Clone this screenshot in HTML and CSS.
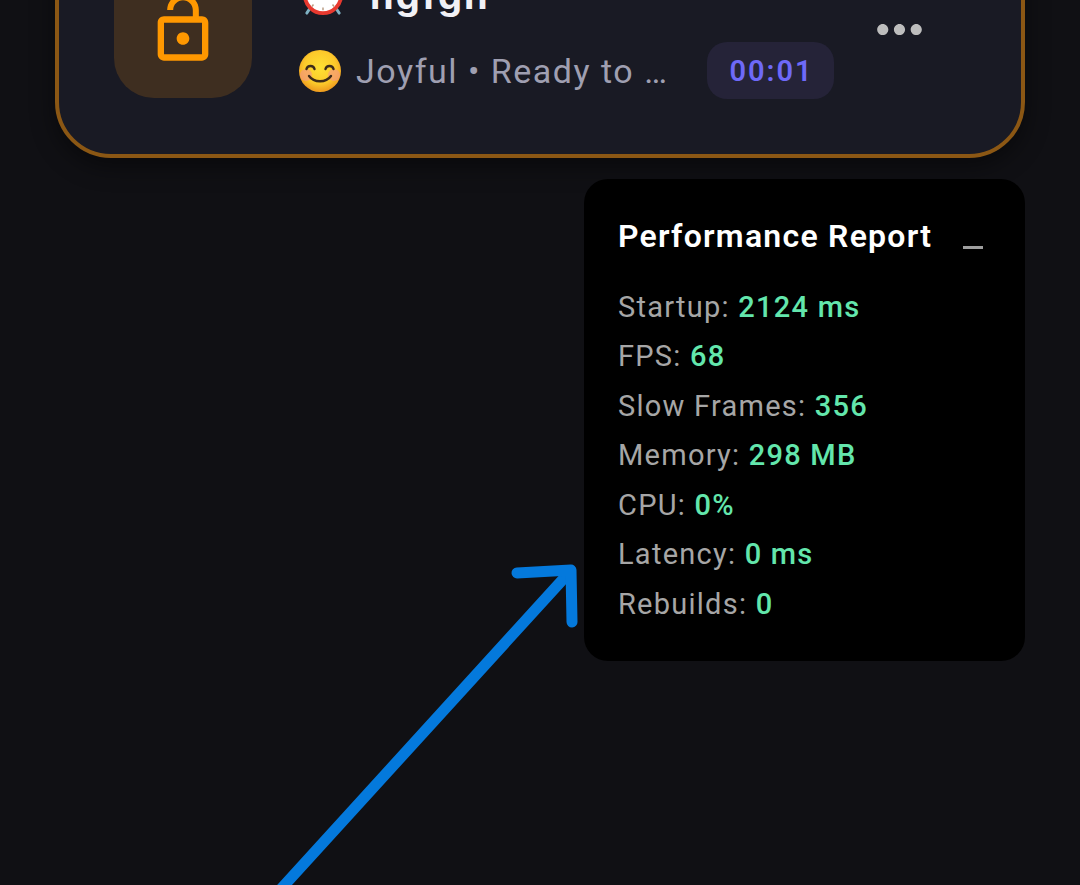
FILE: index.html
```html
<!DOCTYPE html>
<html lang="en">
<head>
  <meta charset="UTF-8">
  <meta name="viewport" content="width=device-width, initial-scale=1.0">
  <title>Performance Report</title>
  <link rel="stylesheet" href="styles.css">
</head>
<body>
  <main class="page">
    <section class="timer-card">
      <div class="lock-tile">
        <svg class="lock-icon" viewBox="0 0 24 24"><path d="M12 17c1.1 0 2-.9 2-2s-.9-2-2-2-2 .9-2 2 .9 2 2 2zm6-9h-1V6c0-2.76-2.24-5-5-5S7 3.24 7 6h1.9c0-1.71 1.39-3.1 3.1-3.1 1.71 0 3.1 1.39 3.1 3.1v2H6c-1.1 0-2 .9-2 2v10c0 1.1.9 2 2 2h12c1.1 0 2-.9 2-2V10c0-1.1-.9-2-2-2zm0 12H6V10h12v10z"/></svg>
      </div>
      <div class="timer-info">
        <div class="title-row">
          <svg class="clock-emoji" viewBox="0 0 44 44">
            <path d="M9 35l-4 6M35 35l4 6" stroke="#7fb2c4" stroke-width="3" stroke-linecap="round"/>
            <circle cx="22" cy="22" r="19" fill="#fff" stroke="#e8392f" stroke-width="4"/>
            <path d="M22 35v3M12 32l-1.500 2M32 32l1.500 2" stroke="#b89a80" stroke-width="1.500"/>
          </svg>
          <h2 class="timer-title">hgfgh</h2>
        </div>
        <div class="status-row">
          <svg class="smile-emoji" viewBox="0 0 44 44">
            <defs>
              <radialGradient id="face" cx="50%" cy="42%" r="55%">
                <stop offset="0%" stop-color="#fee133"/>
                <stop offset="70%" stop-color="#fcc92b"/>
                <stop offset="100%" stop-color="#f0a020"/>
              </radialGradient>
            </defs>
            <circle cx="22" cy="22" r="21" fill="url(#face)"/>
            <circle cx="8" cy="26" r="6" fill="#f59a7c" opacity="0.7"/>
            <circle cx="36" cy="26" r="6" fill="#f59a7c" opacity="0.7"/>
            <path d="M8.500 20c1-4 7-4 8 0M27.500 20c1-4 7-4 8 0" fill="none" stroke="#3d2b1a" stroke-width="2.400" stroke-linecap="round"/>
            <path d="M11 27c5 7 17 7 22 0" fill="none" stroke="#3d2b1a" stroke-width="2.400" stroke-linecap="round"/>
          </svg>
          <span class="status-text">Joyful • Ready to …</span>
          <span class="time-pill">00:01</span>
        </div>
      </div>
      <svg class="menu-icon" viewBox="0 0 24 24"><path d="M6 10c-1.100 0-2 .9-2 2s.9 2 2 2 2-.9 2-2-.9-2-2-2zm12 0c-1.100 0-2 .9-2 2s.9 2 2 2 2-.9 2-2-.9-2-2-2zm-6 0c-1.100 0-2 .9-2 2s.9 2 2 2 2-.9 2-2-.9-2-2-2z"/></svg>
    </section>

    <aside class="perf-panel">
      <div class="perf-head">
        <h3>Performance Report</h3>
        <span class="perf-minimize"></span>
      </div>
      <div class="perf-row">Startup: <b>2124 ms</b></div>
      <div class="perf-row">FPS: <b>68</b></div>
      <div class="perf-row">Slow Frames: <b>356</b></div>
      <div class="perf-row">Memory: <b>298 MB</b></div>
      <div class="perf-row">CPU: <b>0%</b></div>
      <div class="perf-row">Latency: <b>0 ms</b></div>
      <div class="perf-row">Rebuilds: <b>0</b></div>
    </aside>
  </main>

  <!-- hand drawn annotation over the page -->
  <svg class="annotation" viewBox="0 0 1080 885">
    <path d="M280 890L566 576" stroke-width="11"/>
    <path d="M517 573L571 570L572 622" stroke-width="11"/>
  </svg>
</body>
</html>
```

FILE: styles.css
```css
html, body {
  margin: 0;
  height: 885px;
  overflow: hidden;
  background: #101014;
  font-family: 'Roboto', 'Liberation Sans', sans-serif;
}
.page {
  display: flex;
  flex-direction: column;
  padding: 0 55px;
  margin-top: -100px;
}
.timer-card {
  display: flex;
  align-items: center;
  box-sizing: border-box;
  height: 258px;
  padding: 0 56px 0 55px;
  background: #191a24;
  border: 4px solid #8b5714;
  border-radius: 56px;
  box-shadow: 0 8px 24px rgba(0, 0, 0, 0.45);
}
.lock-tile {
  flex: none;
  display: flex;
  align-items: center;
  justify-content: center;
  width: 138px;
  height: 138px;
  background: #3e2e20;
  border-radius: 40px;
}
.lock-icon {
  width: 76px;
  height: 76px;
  fill: #ff9800;
}
.timer-info {
  flex: 1;
  display: flex;
  flex-direction: column;
  gap: 11px;
  margin-left: 46px;
}
.title-row {
  display: flex;
  align-items: center;
  height: 72px;
}
.clock-emoji {
  flex: none;
  width: 42px;
  height: 42px;
  margin-left: 4px;
}
.timer-title {
  margin: 0 0 0 26px;
  font-family: 'Inter', sans-serif;
  font-size: 38px;
  font-weight: 700;
  letter-spacing: 2px;
  color: #f1f1f6;
}
.status-row {
  display: flex;
  align-items: center;
  height: 57px;
}
.smile-emoji {
  flex: none;
  width: 44px;
  height: 44px;
}
.status-text {
  width: 351px;
  margin-left: 14px;
  font-size: 34px;
  letter-spacing: 1.500px;
  color: #9f9fb1;
  white-space: nowrap;
}
.time-pill {
  display: flex;
  align-items: center;
  justify-content: center;
  box-sizing: border-box;
  width: 127px;
  height: 57px;
  padding-left: 2px;
  background: #252338;
  border-radius: 20px;
  font-size: 29px;
  font-weight: 600;
  letter-spacing: 2px;
  color: #6e69f8;
}
.menu-icon {
  flex: none;
  width: 67px;
  height: 67px;
  margin-right: 32px;
  fill: #bdbdbd;
}
.perf-panel {
  align-self: flex-end;
  box-sizing: border-box;
  width: 441px;
  height: 482px;
  margin-top: 21px;
  padding: 34px 34px 0;
  background: #000;
  border-radius: 24px;
}
.perf-head {
  display: flex;
  align-items: center;
  justify-content: space-between;
  margin-bottom: 23.500px;
}
.perf-head h3 {
  margin: 0;
  font-size: 32px;
  font-weight: 600;
  letter-spacing: 1.250px;
  line-height: 46px;
  color: #fff;
}
.perf-minimize {
  width: 20px;
  height: 3px;
  margin: 22px 8px 0 0;
  background: #9e9e9e;
}
.perf-row {
  font-size: 29px;
  line-height: 49.600px;
  letter-spacing: 1.250px;
  color: #a6a6a6;
}
.perf-row b {
  font-weight: 500;
  color: #63e6ac;
}
.annotation {
  position: absolute;
  left: 0;
  top: 0;
  width: 1080px;
  height: 885px;
  fill: none;
  stroke: #0479dc;
  stroke-linecap: round;
  stroke-linejoin: round;
}
```
